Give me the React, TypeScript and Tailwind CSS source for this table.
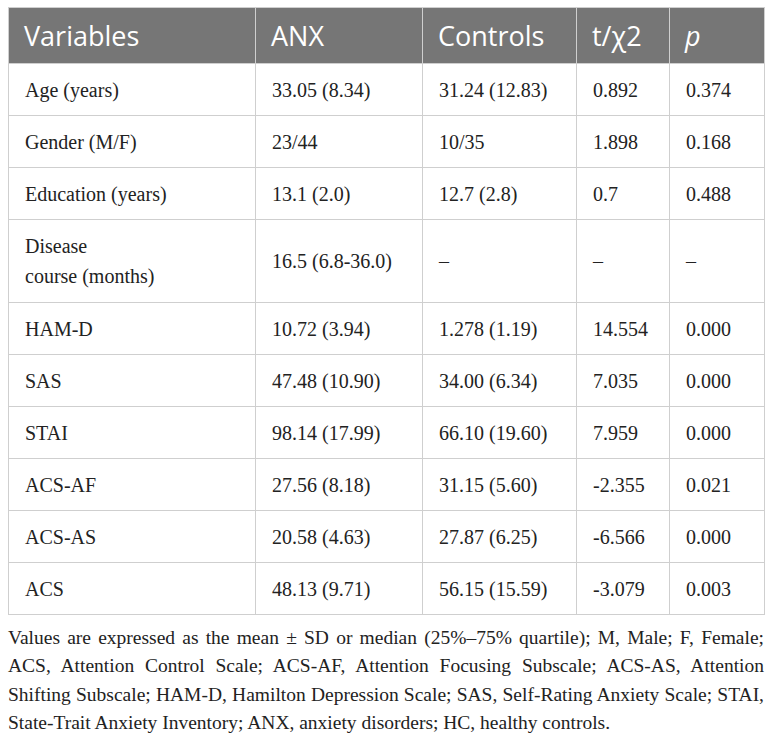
import React from "react";

const rows: [string, string, string, string, string][] = [
  ["Age (years)", "33.05 (8.34)", "31.24 (12.83)", "0.892", "0.374"],
  ["Gender (M/F)", "23/44", "10/35", "1.898", "0.168"],
  ["Education (years)", "13.1 (2.0)", "12.7 (2.8)", "0.7", "0.488"],
  ["DISEASE", "16.5 (6.8-36.0)", "–", "–", "–"],
  ["HAM-D", "10.72 (3.94)", "1.278 (1.19)", "14.554", "0.000"],
  ["SAS", "47.48 (10.90)", "34.00 (6.34)", "7.035", "0.000"],
  ["STAI", "98.14 (17.99)", "66.10 (19.60)", "7.959", "0.000"],
  ["ACS-AF", "27.56 (8.18)", "31.15 (5.60)", "-2.355", "0.021"],
  ["ACS-AS", "20.58 (4.63)", "27.87 (6.25)", "-6.566", "0.000"],
  ["ACS", "48.13 (9.71)", "56.15 (15.59)", "-3.079", "0.003"],
];

export default function App() {
  const serif = { fontFamily: '"Liberation Serif", "Times New Roman", serif' };
  return (
    <div className="w-[772px] h-[734px] bg-white pt-[7px] pl-[8px] overflow-hidden">
      <table className="table-fixed border-collapse w-[756px]">
        <colgroup>
          <col className="w-[247px]" />
          <col className="w-[167px]" />
          <col className="w-[154px]" />
          <col className="w-[93px]" />
          <col className="w-[95px]" />
        </colgroup>
        <thead>
          <tr className="h-[56px] bg-[#767676] text-white text-[27px]" style={{ fontFamily: '"Open Sans", "Noto Sans", sans-serif' }}>
            {["Variables", "ANX", "Controls", "t/χ2", "p"].map((h, i) => (
              <th
                key={i}
                className={`border border-[#cfcfcf] text-left font-normal pl-[15px] align-middle leading-[30px] ${i === 4 ? "italic" : ""}`}
              >
                {h}
              </th>
            ))}
          </tr>
        </thead>
        <tbody className="text-[20px] text-[#222222]" style={serif}>
          {rows.map((r, ri) => (
            <tr key={ri} className={r[0] === "DISEASE" ? "h-[83px]" : "h-[52px]"}>
              {r.map((c, ci) => (
                <td key={ci} className="border border-[#cfcfcf] pl-[16px] align-middle leading-[30px]">
                  {c === "DISEASE" ? (
                    <>
                      Disease
                      <br />
                      course (months)
                    </>
                  ) : (
                    c
                  )}
                </td>
              ))}
            </tr>
          ))}
        </tbody>
      </table>
      <p
        className="w-[756px] text-[19.5px] leading-[28.3px] text-[#222222] text-justify mt-[9px]"
        style={serif}
      >
        Values are expressed as the mean ± SD or median (25%–75% quartile); M, Male; F, Female; ACS, Attention Control Scale; ACS-AF, Attention Focusing Subscale; ACS-AS, Attention Shifting Subscale; HAM-D, Hamilton Depression Scale; SAS, Self-Rating Anxiety Scale; STAI, State-Trait Anxiety Inventory; ANX, anxiety disorders; HC, healthy controls.
      </p>
    </div>
  );
}
